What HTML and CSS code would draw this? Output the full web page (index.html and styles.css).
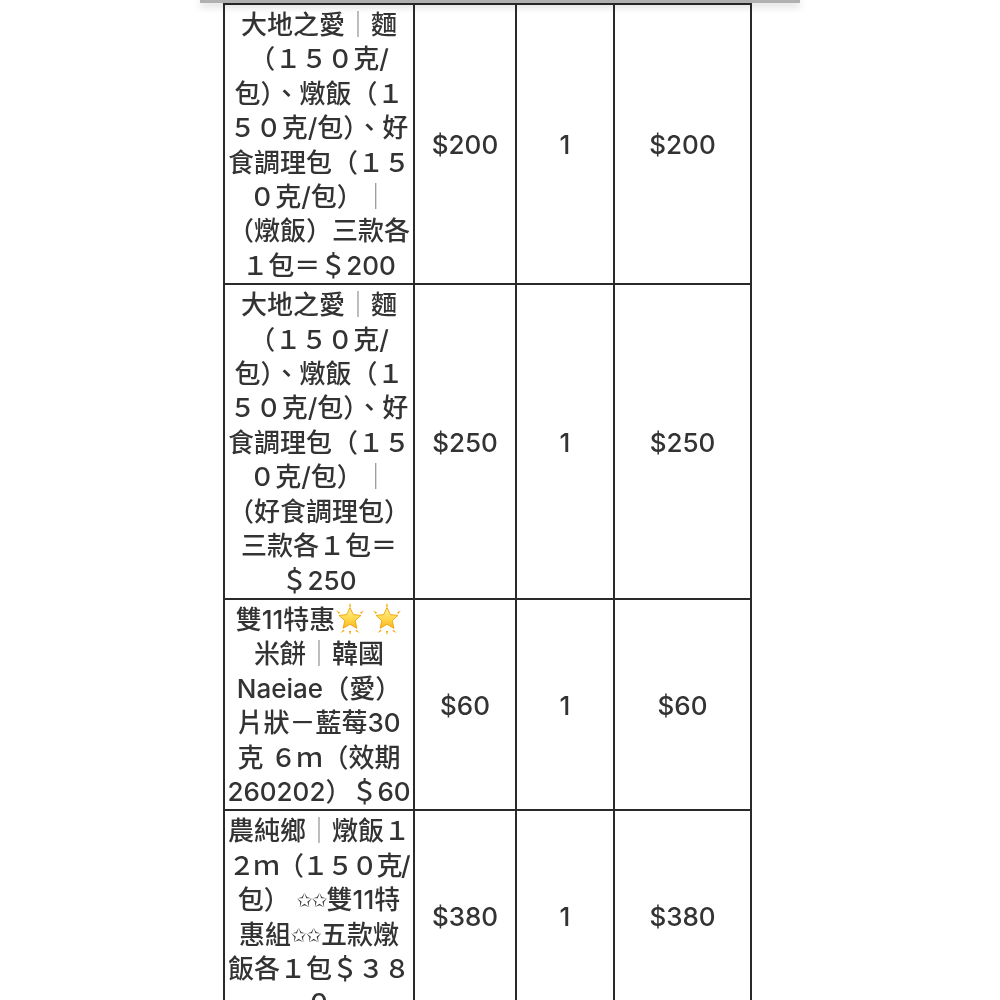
FILE: index.html
```html
<!DOCTYPE html>
<html lang="zh-Hant">
<head>
<meta charset="utf-8">
<title>訂單明細</title>
<link rel="stylesheet" href="styles.css">
</head>
<body>
<div class="topbar"></div>
<div class="page">
  <table class="items">
    <colgroup>
      <col class="c-name">
      <col class="c-price">
      <col class="c-qty">
      <col class="c-sum">
    </colgroup>
    <tr class="stub"><td></td><td></td><td></td><td></td></tr>
    <tr>
      <td class="name">大地之愛<span class="bar">｜</span>麵<br>（１５０克/<br>包）、燉飯（１<br>５０克/包）、好<br>食調理包（１５<br>０克/包）<span class="bar">｜</span><br>（燉飯）三款各<br>１包＝＄200</td>
      <td class="num">$200</td>
      <td class="num">1</td>
      <td class="num">$200</td>
    </tr>
    <tr>
      <td class="name">大地之愛<span class="bar">｜</span>麵<br>（１５０克/<br>包）、燉飯（１<br>５０克/包）、好<br>食調理包（１５<br>０克/包）<span class="bar">｜</span><br>（好食調理包）<br>三款各１包＝<br>＄250</td>
      <td class="num">$250</td>
      <td class="num">1</td>
      <td class="num">$250</td>
    </tr>
    <tr>
      <td class="name">雙11特惠<svg class="glow" viewBox="0 0 30 32" aria-hidden="true"><defs><linearGradient id="g1" x1="0" y1="0" x2="0" y2="1"><stop offset="0" stop-color="#FFF2A0"/><stop offset="0.55" stop-color="#FFD84A"/><stop offset="1" stop-color="#F7B524"/></linearGradient></defs><path d="M15 4.5 L18.3 11.6 L26 12.4 L20.2 17.6 L21.9 25.3 L15 21.3 L8.1 25.3 L9.8 17.6 L4 12.4 L11.7 11.6 Z" fill="url(#g1)" stroke="#F2A300" stroke-width="0.9" stroke-linejoin="round"/><path d="M15 0 L16.1 3.6 L13.9 3.6 Z M1.2 7.6 L5 9.6 L3.9 11.1 Z M28.8 7.6 L25 9.6 L26.1 11.1 Z M5.5 30 L8.4 26.7 L9.6 28 Z M24.5 30 L21.6 26.7 L20.4 28 Z M15 32 L13.9 28 L16.1 28 Z" fill="#F5A500"/></svg> <svg class="glow" viewBox="0 0 30 32" aria-hidden="true"><path d="M15 4.5 L18.3 11.6 L26 12.4 L20.2 17.6 L21.9 25.3 L15 21.3 L8.1 25.3 L9.8 17.6 L4 12.4 L11.7 11.6 Z" fill="url(#g1)" stroke="#F2A300" stroke-width="0.9" stroke-linejoin="round"/><path d="M15 0 L16.1 3.6 L13.9 3.6 Z M1.2 7.6 L5 9.6 L3.9 11.1 Z M28.8 7.6 L25 9.6 L26.1 11.1 Z M5.5 30 L8.4 26.7 L9.6 28 Z M24.5 30 L21.6 26.7 L20.4 28 Z M15 32 L13.9 28 L16.1 28 Z" fill="#F5A500"/></svg><br>米餅<span class="bar">｜</span>韓國<br>Naeiae（愛）<br>片狀－藍莓30<br>克 ６ｍ（效期<br>260202）＄60</td>
      <td class="num">$60</td>
      <td class="num">1</td>
      <td class="num">$60</td>
    </tr>
    <tr>
      <td class="name">農純鄉<span class="bar">｜</span>燉飯１<br><span class="tight">２ｍ（１５０克/</span><br>包） <span class="tiny">✩✩</span>雙11特<br>惠組<span class="tiny">✩✩</span>五款燉<br>飯各１包＄３８<br>０</td>
      <td class="num">$380</td>
      <td class="num">1</td>
      <td class="num">$380</td>
    </tr>
  </table>
</div>
</body>
</html>
```
FILE: styles.css
```css
html, body {
  margin: 0;
  padding: 0;
  background: #ffffff;
  height: 1000px;
  overflow: hidden;
}

body {
  font-family: Inter, "Noto Sans CJK TC", "Noto Sans", sans-serif;
  color: #333333;
  position: relative;
}

.topbar {
  position: absolute;
  top: 0;
  left: 200px;
  width: 600px;
  height: 3px;
  background: #b0b0b0;
  box-shadow: 0 2px 8px rgba(0, 0, 0, 0.3);
  z-index: 2;
}

.page {
  padding-left: 223px;
  will-change: transform;
}

.items {
  border-collapse: collapse;
  table-layout: fixed;
  width: 527px;
}

.c-name { width: 190px; }
.c-price { width: 102px; }
.c-qty { width: 98px; }
.c-sum { width: 137px; }

.items td {
  border: 2px solid #2a2a2a;
  padding: 3px 0 0;
  text-align: center;
  vertical-align: middle;
  font-size: 26px;
  line-height: 34.4px;
  font-weight: 500;
}

.items .stub td {
  height: 1px;
  padding: 0;
  line-height: 1px;
  font-size: 1px;
}

.items td.name {
  white-space: nowrap;
}

.bar {
  color: #8a8a8a;
  font-weight: 400;
}

.tight {
  letter-spacing: -1.4px;
}

.glow {
  width: 30px;
  height: 32px;
  vertical-align: -6px;
}

.tiny {
  font-family: "DejaVu Sans", sans-serif;
  font-size: 19px;
  letter-spacing: -1px;
  vertical-align: 2px;
}
```
